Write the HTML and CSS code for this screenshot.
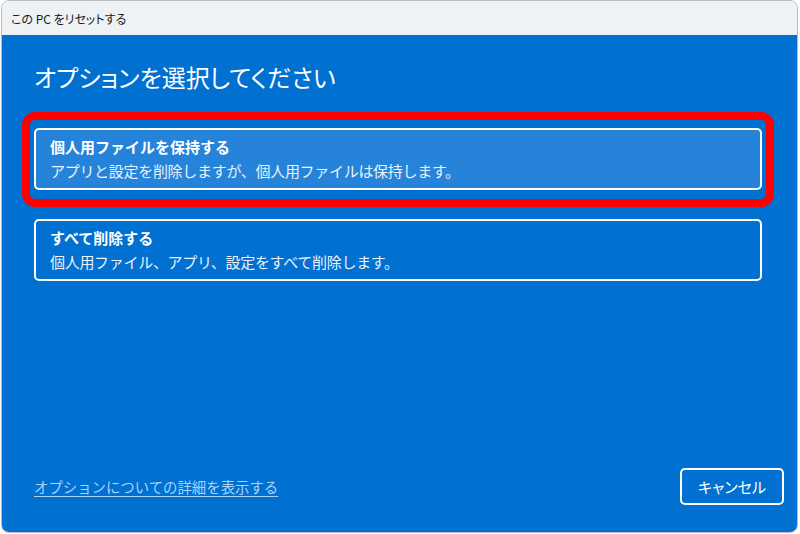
FILE: index.html
```html
<!DOCTYPE html>
<html lang="ja">
<head>
    <meta charset="UTF-8">
    <title>この PC をリセットする</title>
    <link rel="stylesheet" href="styles.css">
</head>
<body>
    <div class="window">
        <div class="titlebar">この PC をリセットする</div>

        <div class="content">
            <div class="main">
                <h1 class="heading">オプションを選択してください</h1>

                <div class="highlight">
                    <div class="option hover">
                        <div class="option-title">個人用ファイルを保持する</div>
                        <div class="option-desc">アプリと設定を削除しますが、個人用ファイルは保持します。</div>
                    </div>
                </div>

                <div class="option second">
                    <div class="option-title">すべて削除する</div>
                    <div class="option-desc">個人用ファイル、アプリ、設定をすべて削除します。</div>
                </div>
            </div>

            <div class="footer">
                <a href="#" class="more-link">オプションについての詳細を表示する</a>
                <button class="cancel-btn">キャンセル</button>
            </div>
        </div>
    </div>
</body>
</html>
```

FILE: styles.css
```css
body {
    margin: 0;
    padding: 0;
    background-color: #ffffff;
    font-family: 'Noto Sans CJK JP', 'Noto Sans', sans-serif;
}
.window {
    width: 797px;
    height: 533px;
    margin-left: 1px;
    border: 1px solid #b9bdc1;
    border-radius: 8px;
    overflow: hidden;
    box-sizing: border-box;
    display: flex;
    flex-direction: column;
}
.titlebar {
    height: 34px;
    background-color: #eef2f5;
    color: #1b1b1b;
    font-size: 12px;
    padding-left: 9px;
    display: flex;
    align-items: center;
    flex-shrink: 0;
    font-feature-settings: "palt";
}
.content {
    flex: 1;
    background-color: #0070d1;
    display: flex;
    flex-direction: column;
    color: white;
}
.main {
    flex: 1;
    padding: 0 23px 0 20px;
}
.heading {
    margin: 25px 0 18px 12px;
    font-size: 24px;
    font-weight: normal;
    line-height: 34px;
    font-feature-settings: "palt";
}
.highlight {
    border: 8px solid #ff0000;
    border-radius: 13px;
    padding: 8px 4px 9px 4px;
    margin-bottom: 12px;
}
.option {
    border: 2px solid white;
    border-radius: 5px;
    padding: 5px 14px;
    line-height: 24px;
    font-size: 15px;
}
.option.hover {
    background-color: #2584d9;
}
.option.second {
    margin: 0 12px;
}
.option-title {
    font-weight: bold;
}
.option-desc {
    color: #eaf2fb;
    letter-spacing: -0.3px;
}
.footer {
    display: flex;
    align-items: center;
    justify-content: space-between;
    padding: 0 13px 27px 32px;
}
.more-link {
    color: #a9d3f7;
    font-size: 14.4px;
    text-underline-offset: 3px;
}
.cancel-btn {
    width: 104px;
    height: 37px;
    background: transparent;
    color: white;
    border: 2px solid white;
    border-radius: 5px;
    font-family: inherit;
    font-size: 15px;
    font-feature-settings: "palt";
    cursor: pointer;
}
```
